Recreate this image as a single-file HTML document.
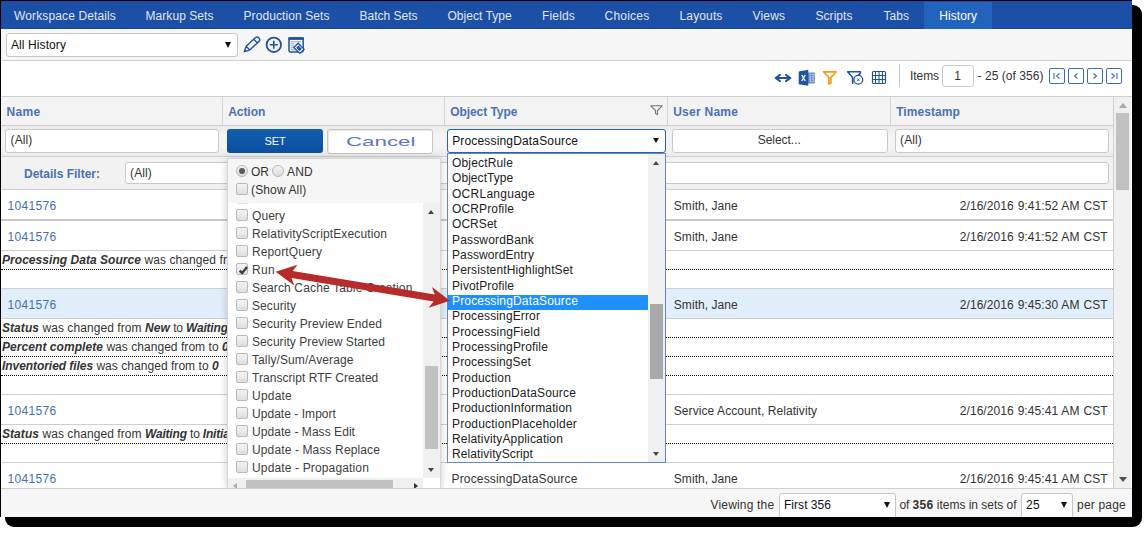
<!DOCTYPE html>
<html><head><meta charset="utf-8">
<style>
*{box-sizing:border-box;margin:0;padding:0}
html,body{width:1148px;height:533px;overflow:hidden;background:#fff;font-family:"Liberation Sans",sans-serif;font-size:12px;color:#333}
.a{position:absolute}
#shadow{position:absolute;left:5px;top:5px;width:1137px;height:522px;background:#000;border-radius:9px}
#frame{position:absolute;left:0;top:0;width:1132px;height:517px;background:#fff;border-top:1px solid #000;border-left:1px solid #000;overflow:hidden}
#nav{position:absolute;left:0;top:0;width:1131px;height:28px;background:#1c4fa6;border-bottom:1px solid #17469a}
.tab{position:absolute;top:0;height:28px;line-height:31px;font-size:12px;color:#e2e6ef;white-space:nowrap}
.tab.act{background:#2263bd;color:#fff;top:1px;height:27px;line-height:29px}
#tb1{position:absolute;left:0;top:28px;width:1131px;height:32px;background:#f6f6f6;border-bottom:1px solid #cfcfcf}
.sel{position:absolute;background:#fff;border:1px solid #c6c6c6;border-radius:3px;white-space:nowrap}
.arr{position:absolute;width:0;height:0;border-left:4px solid transparent;border-right:4px solid transparent;border-top:8px solid #111}
#tb2{position:absolute;left:0;top:60px;width:1131px;height:36px;background:#fff;border-bottom:1px solid #cfcfcf}
.pg{position:absolute;top:7px;width:16px;height:16px;border:1px solid #3b6cb5;border-radius:2px;background:#fff}
#hdr{position:absolute;left:0;top:96px;width:1112px;height:29px;background:#f3f3f3;border-bottom:1px solid #cfcfcf}
.hc{position:absolute;top:0;height:28px;border-left:1px solid #d4d4d4;font-weight:bold;color:#4a72b4;line-height:30px;padding-left:5.2px}
#flt{position:absolute;left:0;top:125px;width:1112px;height:31px;background:linear-gradient(#eaeaea,#f4f4f4 30%,#f4f4f4 70%,#ebebeb);border-bottom:1px solid #cfcfcf}
.inp{position:absolute;background:#fff;border:1px solid #c9c9c9;border-radius:3px;white-space:nowrap;padding-left:5px;line-height:21px}
#dflt{position:absolute;left:0;top:156px;width:1112px;height:33px;background:#f2f2f2;border-bottom:1px solid #cfcfcf}
.row{position:absolute;left:0;width:1112px;background:#fff;border-bottom:1px solid #cfcfcf}
.lnk{position:absolute;left:6.5px;color:#4370b5}
.un{position:absolute;left:672.8px}
.ts{position:absolute;right:5.4px;word-spacing:0.5px}
.det{position:absolute;left:0;width:1112px;height:19px;border-bottom:1px dotted #000;padding-left:1px;white-space:nowrap;line-height:18px}
.det b{font-style:italic}
#footer{position:absolute;left:0;top:487px;width:1131px;height:30px;background:#f6f6f6;border-top:1px solid #cfcfcf}
#vscroll{position:absolute;left:1112px;top:96px;width:19px;height:392px;background:#f0f0f0;border-left:1px solid #cfcfcf;border-right:1px solid #fff}
.cb{position:absolute;width:12px;height:12px;border:1px solid #b8b8b8;border-radius:2px;background:linear-gradient(#f4f4f4,#dedede)}
.pitem{position:absolute;left:24px;white-space:nowrap;color:#3d3d3d;line-height:14px}
.oitem{position:absolute;left:4px;white-space:nowrap;color:#222;height:15.3px;line-height:15px}
</style></head><body>
<div id="shadow"></div>
<div id="frame">
 <div id="nav">
  <div class="tab" style="left:13.1px"><span style="letter-spacing:0.116px">Workspace Details</span></div>
  <div class="tab" style="left:144.5px"><span style="letter-spacing:0.058px">Markup Sets</span></div>
  <div class="tab" style="left:242.5px"><span style="letter-spacing:0.086px">Production Sets</span></div>
  <div class="tab" style="left:358.5px">Batch Sets</div>
  <div class="tab" style="left:446.5px"><span style="letter-spacing:0.028px">Object Type</span></div>
  <div class="tab" style="left:541px"><span style="letter-spacing:0.165px">Fields</span></div>
  <div class="tab" style="left:603.5px"><span style="letter-spacing:0.235px">Choices</span></div>
  <div class="tab" style="left:678.5px"><span style="letter-spacing:0.139px">Layouts</span></div>
  <div class="tab" style="left:751.5px"><span style="letter-spacing:0.198px">Views</span></div>
  <div class="tab" style="left:814.5px"><span style="letter-spacing:0.047px">Scripts</span></div>
  <div class="tab" style="left:882.5px"><span style="letter-spacing:0.081px">Tabs</span></div>
  <div class="tab act" style="left:923px;width:68px;padding-left:15.2px"><span style="letter-spacing:0.095px">History</span></div>
 </div>
 <div id="tb1">
  <div class="sel" style="left:5px;top:4px;width:232px;height:24px;line-height:22px;padding-left:4px;color:#111"><span style="letter-spacing:0.090px">All History</span></div>
  <div class="a" style="left:224px;top:13px;border-left:3.2px solid transparent;border-right:3.2px solid transparent;border-top:6px solid #111"></div>
  <svg class="a" style="left:239px;top:3px" width="70" height="26" viewBox="240 32 70 26">
   <g transform="translate(244.3,51.6) rotate(-43)"><path d="M0,0 L5,-2.6 H17.4 a2.6,2.6 0 0 1 0,5.2 H5 Z M5,-2.6 V2.6 M15.4,-2.6 V2.6" fill="none" stroke="#1f53a3" stroke-width="1.4" stroke-linejoin="round"/><path d="M0,0 L2.2,-1.2 V1.2 Z" fill="#1f53a3"/></g>
   <circle cx="273.8" cy="44.8" r="7.2" fill="none" stroke="#1f53a3" stroke-width="1.8"/><path d="M273.8 40.8 V48.8 M269.8 44.8 H277.8" stroke="#1f53a3" stroke-width="1.6"/>
   <rect x="289" y="38" width="14.2" height="14" rx="1.5" fill="#fff" stroke="#1f53a3" stroke-width="1.5"/><rect x="288.3" y="37.3" width="15.6" height="2.6" fill="#1f53a3"/>
   <path d="M290.5 41.8 H301 M290.5 43.8 H294.5 M290.5 45.8 H294.5 M290.5 47.8 H294.5 M290.5 49.8 H296" stroke="#8aa6d3" stroke-width="1"/>
   <g transform="translate(299,48.3) rotate(45)"><rect x="-4.2" y="-3" width="8.4" height="6" fill="#fff" stroke="#1f53a3" stroke-width="1.3"/><rect x="-2.4" y="-1.6" width="4.8" height="3.2" fill="#1f53a3"/></g>
  </svg>
 </div>
 <div id="tb2">
  <svg class="a" style="left:769px;top:1px" width="120" height="30" viewBox="770 62 120 30">
   <path d="M777 78 H789" stroke="#1f53a3" stroke-width="2"/><path d="M780 74.9 L775.6 78 L780 81.1 M786 74.9 L790.4 78 L786 81.1" fill="none" stroke="#1f53a3" stroke-width="2" stroke-linejoin="round" stroke-linecap="round"/>
   <rect x="807.5" y="72.5" width="7.3" height="11" fill="#6b8fc7"/><path d="M810.2 74 V82.5 M813 74 V82.5" stroke="#fff" stroke-width="1" stroke-dasharray="1.2 1"/>
   <path d="M798.7 71.6 L808.3 69.8 V85.8 L798.7 84.2 Z" fill="#1f53a3"/><path d="M801.7 75 L805.3 81 M805.3 75 L801.7 81" stroke="#fff" stroke-width="1.3"/>
   <path d="M823.6 71.8 H836.1 L830.9 77.6 V83 L828.9 84 V77.6 Z" fill="none" stroke="#f39c1a" stroke-width="1.7" stroke-linejoin="round"/>
   <path d="M860.4 73.4 V71.8 H847.6 L852.6 77.6 V84" fill="none" stroke="#1f53a3" stroke-width="1.6" stroke-linejoin="round"/><path d="M860.4 73.4 L856.5 76.8" stroke="#1f53a3" stroke-width="1.6"/>
   <circle cx="858.3" cy="79.8" r="4.4" fill="#fff" stroke="#1f53a3" stroke-width="1.3"/><path d="M857 78.5 L859.6 81.1 M859.6 78.5 L857 81.1" stroke="#1f53a3" stroke-width="0.9"/>
   <rect x="872.5" y="71.5" width="13" height="12" rx="1" fill="none" stroke="#1f53a3" stroke-width="1.2"/><path d="M875.5 71.5 V83.5 M879 71.5 V83.5 M882.5 71.5 V83.5 M872.5 75.5 H885.5 M872.5 79.5 H885.5" stroke="#1f53a3" stroke-width="1.1"/>
  </svg>
  <div class="a" style="left:898px;top:3px;width:1px;height:23px;background:#c8c8c8"></div>
  <div class="a" style="left:909px;top:8px;color:#333"><span style="letter-spacing:-0.068px">Items</span></div>
  <div class="inp" style="left:940.8px;top:4.3px;width:32px;height:22px;text-align:center;padding:0;line-height:20px"><span style="letter-spacing:0.326px">1</span></div>
  <div class="a" style="left:976.5px;top:8px;color:#333"><span style="letter-spacing:0.049px">- 25 (of 356)</span></div>
  <div class="pg" style="left:1048px"><svg width="14" height="14" viewBox="0 0 14 14"><path d="M4 4 V10 M9.5 4.5 L6.5 7 L9.5 9.5" fill="none" stroke="#3b6cb5" stroke-width="1.1"/></svg></div>
  <div class="pg" style="left:1067px"><svg width="14" height="14" viewBox="0 0 14 14"><path d="M8.5 4.5 L5.5 7 L8.5 9.5" fill="none" stroke="#3b6cb5" stroke-width="1.1"/></svg></div>
  <div class="pg" style="left:1086px"><svg width="14" height="14" viewBox="0 0 14 14"><path d="M5.5 4.5 L8.5 7 L5.5 9.5" fill="none" stroke="#3b6cb5" stroke-width="1.1"/></svg></div>
  <div class="pg" style="left:1105px"><svg width="14" height="14" viewBox="0 0 14 14"><path d="M10 4 V10 M4.5 4.5 L7.5 7 L4.5 9.5" fill="none" stroke="#3b6cb5" stroke-width="1.1"/></svg></div>
 </div>
 <div id="hdr">
  <div class="hc" style="left:-1px;width:223px;border-left:none;padding-left:6.5px"><span style="letter-spacing:0.329px">Name</span></div>
  <div class="hc" style="left:221px;width:223px"><span style="letter-spacing:-0.055px">Action</span></div>
  <div class="hc" style="left:443px;width:223px"><span style="letter-spacing:-0.062px">Object Type</span><svg class="a" style="left:205.2px;top:7.7px" width="13" height="11" viewBox="0 0 13 11"><path d="M0.8 0.8 H12.2 L7.5 5.5 V9.6 L5.5 8.6 V5.5 Z" fill="none" stroke="#777" stroke-width="1.1" stroke-linejoin="round"/></svg></div>
  <div class="hc" style="left:666px;width:223px"><span style="letter-spacing:0.255px">User Name</span></div>
  <div class="hc" style="left:889px;width:224px"><span style="letter-spacing:0.072px">Timestamp</span></div>
 </div>
 <div id="flt">
  <div class="inp" style="left:4px;top:3px;width:214px;height:24px;padding-left:4.5px"><span style="letter-spacing:0.134px">(All)</span></div>
  <div class="a" style="left:226px;top:3px;width:96px;height:24px;border-radius:3px;background:linear-gradient(#135eb0,#0b4f9e);color:#fff;font-size:11px;text-align:center;line-height:24px"><span style="letter-spacing:-0.131px">SET</span></div>
  <div class="a" style="left:326px;top:3px;width:106px;height:25px;border-radius:3px;border:1px solid #c6c6c6;background:#fff;box-shadow:inset 1px 1px 0 #e8e8e8"><span class="a nols" style="left:17.9px;top:5.1px;font-size:12.4px;color:#5f76c4;transform:scaleX(1.8);transform-origin:0 0;line-height:14px">Cancel</span></div>
  <div class="a" style="left:446px;top:3px;width:219px;height:24px;border:1px solid #2c5fb4;border-radius:3px;background:#fff;line-height:22px;padding-left:4.2px;color:#111"><span style="letter-spacing:0.163px">ProcessingDataSource</span><div class="a" style="left:204.8px;top:7.7px;border-left:3px solid transparent;border-right:3px solid transparent;border-top:5.5px solid #111"></div></div>
  <div class="inp" style="left:671px;top:3px;width:216px;height:24px;text-align:center;padding:0 1.5px 0 0"><span style="letter-spacing:-0.039px">Select...</span></div>
  <div class="inp" style="left:894px;top:3px;width:214px;height:24px;padding-left:4px"><span style="letter-spacing:0.134px">(All)</span></div>
 </div>
 <div id="dflt">
  <div class="a" style="left:23px;top:1px;line-height:33px;font-weight:bold;color:#4a72b4">Details Filter:</div>
  <div class="inp" style="left:124px;top:5px;width:984px;height:22px;line-height:20px;padding-left:4px"><span style="letter-spacing:0.134px">(All)</span></div>
 </div>
 <!-- rows -->
 <div class="row" style="top:189px;height:31px;border-bottom:2px solid #c9c9c9"><span class="lnk" style="top:9px"><span style="letter-spacing:0.326px">1041576</span></span><span class="un" style="top:9px"><span style="letter-spacing:0.058px">Smith, Jane</span></span><span class="ts" style="top:9px"><span style="letter-spacing:0.066px">2/16/2016 9:41:52 AM CST</span></span></div>
 <div class="row" style="top:220px;height:30px"><span class="lnk" style="top:9px"><span style="letter-spacing:0.326px">1041576</span></span><span class="un" style="top:9px"><span style="letter-spacing:0.058px">Smith, Jane</span></span><span class="ts" style="top:9px"><span style="letter-spacing:0.066px">2/16/2016 9:41:52 AM CST</span></span></div>
 <div class="det" style="top:250px"><b><span style="letter-spacing:0.043px">Processing Data Source</span></b><span style="letter-spacing:0.086px"> was changed fr</span></div>
 <div class="row" style="top:269px;height:19px;border-bottom:1px solid #cfcfcf"></div>
 <div class="row" style="top:288px;height:30px;background:#e1effc"><span class="lnk" style="top:9px"><span style="letter-spacing:0.326px">1041576</span></span><span class="un" style="top:9px"><span style="letter-spacing:0.058px">Smith, Jane</span></span><span class="ts" style="top:9px"><span style="letter-spacing:0.066px">2/16/2016 9:45:30 AM CST</span></span></div>
 <div class="det" style="top:318px"><b><span style="letter-spacing:0.054px">Status</span></b><span style="letter-spacing:0.071px"> was changed from </span><b><span style="letter-spacing:0.109px">New</span></b><span style="letter-spacing:-0.169px"> to </span><b><span style="letter-spacing:-0.189px">Waiting</span></b></div>
 <div class="det" style="top:337px"><b><span style="letter-spacing:0.060px">Percent complete</span></b><span style="letter-spacing:0.045px"> was changed from to </span><b><span style="letter-spacing:0.326px">0</span></b></div>
 <div class="det" style="top:356px"><b><span style="letter-spacing:-0.060px">Inventoried files</span></b><span style="letter-spacing:0.045px"> was changed from to </span><b><span style="letter-spacing:0.326px">0</span></b></div>
 <div class="row" style="top:375px;height:19px"></div>
 <div class="row" style="top:394px;height:30px"><span class="lnk" style="top:9px"><span style="letter-spacing:0.326px">1041576</span></span><span class="un" style="top:9px"><span style="letter-spacing:0.072px">Service Account, Relativity</span></span><span class="ts" style="top:9px"><span style="letter-spacing:0.066px">2/16/2016 9:45:41 AM CST</span></span></div>
 <div class="det" style="top:424px"><b><span style="letter-spacing:0.054px">Status</span></b><span style="letter-spacing:0.071px"> was changed from </span><b><span style="letter-spacing:-0.189px">Waiting</span></b><span style="letter-spacing:-0.169px"> to </span><b><span style="letter-spacing:-0.191px">Initial</span></b></div>
 <div class="row" style="top:443px;height:19px"></div>
 <div class="row" style="top:462px;height:26px"><span class="lnk" style="top:9px"><span style="letter-spacing:0.326px">1041576</span></span><span class="a" style="left:450.5px;top:9px"><span style="letter-spacing:0.163px">ProcessingDataSource</span></span><span class="un" style="top:9px"><span style="letter-spacing:0.058px">Smith, Jane</span></span><span class="ts" style="top:9px"><span style="letter-spacing:0.066px">2/16/2016 9:45:41 AM CST</span></span></div>
<div class="a" style="left:226px;top:157px;width:214px;height:331px;background:#f5f5f5;border:1px solid #d6d6d6;box-shadow:0 1px 8px rgba(0,0,0,0.2)">
  <div class="a" style="left:8px;top:6px;width:12px;height:12px;border-radius:50%;border:1px solid #b5b5b5;background:linear-gradient(#f4f4f4,#dcdcdc)"><div class="a" style="left:2px;top:2px;width:6px;height:6px;border-radius:50%;background:#5a5a5a"></div></div>
  <div class="a" style="left:23px;top:6px">OR</div>
  <div class="a" style="left:44.2px;top:6px;width:12px;height:12px;border-radius:50%;border:1px solid #b5b5b5;background:linear-gradient(#f4f4f4,#dcdcdc)"></div>
  <div class="a" style="left:59px;top:6px"><span style="letter-spacing:0.221px">AND</span></div>
  <div class="cb" style="left:8px;top:23.7px"></div>
  <div class="a" style="left:23px;top:24px"><span style="letter-spacing:0.132px">(Show All)</span></div>
  <div class="a" style="left:0;top:44px;width:212px;height:287px;background:#fff;overflow:hidden">
   <div class="a" style="left:10px;top:0px;width:10px;height:1px;background:#e2e2e2"></div>
   <div class="cb" style="left:8px;top:5.5px"></div><div class="pitem" style="top:5.5px"><span style="letter-spacing:0.064px">Query</span></div>
   <div class="cb" style="left:8px;top:23.5px"></div><div class="pitem" style="top:23.5px"><span style="letter-spacing:0.118px">RelativityScriptExecution</span></div>
   <div class="cb" style="left:8px;top:41.5px"></div><div class="pitem" style="top:41.5px"><span style="letter-spacing:0.119px">ReportQuery</span></div>
   <div class="cb" style="left:8px;top:59.5px"><svg class="a" style="left:1px;top:1px" width="10" height="10" viewBox="0 0 10 10"><path d="M1.7 5.6 L4.1 8.1 L9 2" fill="none" stroke="#3c3c3c" stroke-width="2.3"/></svg></div><div class="pitem" style="top:59.5px"><span style="letter-spacing:0.329px">Run</span></div>
   <div class="cb" style="left:8px;top:77.5px"></div><div class="pitem" style="top:77.5px"><span style="letter-spacing:0.145px">Search Cache Table Creation</span></div>
   <div class="cb" style="left:8px;top:95.5px"></div><div class="pitem" style="top:95.5px"><span style="letter-spacing:0.082px">Security</span></div>
   <div class="cb" style="left:8px;top:113.5px"></div><div class="pitem" style="top:113.5px"><span style="letter-spacing:0.118px">Security Preview Ended</span></div>
   <div class="cb" style="left:8px;top:131.5px"></div><div class="pitem" style="top:131.5px"><span style="letter-spacing:0.067px">Security Preview Started</span></div>
   <div class="cb" style="left:8px;top:149.5px"></div><div class="pitem" style="top:149.5px"><span style="letter-spacing:0.096px">Tally/Sum/Average</span></div>
   <div class="cb" style="left:8px;top:167.5px"></div><div class="pitem" style="top:167.5px"><span style="letter-spacing:0.044px">Transcript RTF Created</span></div>
   <div class="cb" style="left:8px;top:185.5px"></div><div class="pitem" style="top:185.5px"><span style="letter-spacing:0.217px">Update</span></div>
   <div class="cb" style="left:8px;top:203.5px"></div><div class="pitem" style="top:203.5px"><span style="letter-spacing:0.042px">Update - Import</span></div>
   <div class="cb" style="left:8px;top:221.5px"></div><div class="pitem" style="top:221.5px"><span style="letter-spacing:0.053px">Update - Mass Edit</span></div>
   <div class="cb" style="left:8px;top:239.5px"></div><div class="pitem" style="top:239.5px"><span style="letter-spacing:0.124px">Update - Mass Replace</span></div>
   <div class="cb" style="left:8px;top:257.5px"></div><div class="pitem" style="top:257.5px"><span style="letter-spacing:0.146px">Update - Propagation</span></div>
   <div class="a" style="left:195px;top:0;width:17px;height:275px;background:#f0f0f0"><div class="a" style="left:5px;top:6.8px;border-left:3.6px solid transparent;border-right:3.6px solid transparent;border-bottom:4.4px solid #444"></div><div class="a" style="left:2px;top:163px;width:13px;height:83px;background:#c1c1c1"></div><div class="a" style="left:5px;top:264.5px;border-left:3.6px solid transparent;border-right:3.6px solid transparent;border-top:4.4px solid #444"></div></div>
   <div class="a" style="left:0;top:275px;width:195px;height:14px;background:#f0f0f0"><div class="a" style="left:5px;top:5px;border-top:3px solid transparent;border-bottom:3px solid transparent;border-right:4px solid #aaa"></div><div class="a" style="left:18px;top:2px;width:147px;height:10px;background:#c1c1c1"></div><div class="a" style="left:186px;top:5px;border-top:3px solid transparent;border-bottom:3px solid transparent;border-left:4px solid #333"></div></div>
  </div>
 </div>
<div class="a" style="left:446px;top:152px;width:219px;height:310px;background:#fff;border:1px solid #5f86c9;overflow:hidden">
  <div class="oitem" style="top:2.00px"><span style="letter-spacing:0.164px">ObjectRule</span></div>
  <div class="oitem" style="top:17.33px"><span style="letter-spacing:0.064px">ObjectType</span></div>
  <div class="oitem" style="top:32.66px"><span style="letter-spacing:0.268px">OCRLanguage</span></div>
  <div class="oitem" style="top:47.99px"><span style="letter-spacing:0.132px">OCRProfile</span></div>
  <div class="oitem" style="top:63.32px"><span style="letter-spacing:0.054px">OCRSet</span></div>
  <div class="oitem" style="top:78.65px"><span style="letter-spacing:0.163px">PasswordBank</span></div>
  <div class="oitem" style="top:93.98px"><span style="letter-spacing:0.100px">PasswordEntry</span></div>
  <div class="oitem" style="top:109.31px"><span style="letter-spacing:0.134px">PersistentHighlightSet</span></div>
  <div class="oitem" style="top:124.64px"><span style="letter-spacing:0.109px">PivotProfile</span></div>
  <div class="a" style="left:0;top:141.07px;width:200px;height:14.6px;background:#1e90ff"></div><div class="oitem" style="top:139.97px;color:#fff"><span style="letter-spacing:0.163px">ProcessingDataSource</span></div>
  <div class="oitem" style="top:155.30px"><span style="letter-spacing:0.132px">ProcessingError</span></div>
  <div class="oitem" style="top:170.63px"><span style="letter-spacing:0.175px">ProcessingField</span></div>
  <div class="oitem" style="top:185.96px"><span style="letter-spacing:0.154px">ProcessingProfile</span></div>
  <div class="oitem" style="top:201.29px"><span style="letter-spacing:0.125px">ProcessingSet</span></div>
  <div class="oitem" style="top:216.62px"><span style="letter-spacing:0.163px">Production</span></div>
  <div class="oitem" style="top:231.95px"><span style="letter-spacing:0.163px">ProductionDataSource</span></div>
  <div class="oitem" style="top:247.28px"><span style="letter-spacing:0.124px">ProductionInformation</span></div>
  <div class="oitem" style="top:262.61px"><span style="letter-spacing:0.203px">ProductionPlaceholder</span></div>
  <div class="oitem" style="top:277.94px"><span style="letter-spacing:0.172px">RelativityApplication</span></div>
  <div class="oitem" style="top:293.27px"><span style="letter-spacing:0.103px">RelativityScript</span></div>
  <div class="a" style="left:200px;top:0;width:17px;height:308px;background:#f0f0f0"><div class="a" style="left:5px;top:6.8px;border-left:3.6px solid transparent;border-right:3.6px solid transparent;border-bottom:4.4px solid #444"></div><div class="a" style="left:2px;top:149.5px;width:13px;height:75px;background:#a9a9a9"></div><div class="a" style="left:5px;top:297.5px;border-left:3.6px solid transparent;border-right:3.6px solid transparent;border-top:4.4px solid #444"></div></div>
 </div>
<svg class="a" style="left:0;top:0" width="1131" height="516"><polygon points="274.6,270.8 296.5,263.8 291.7,270.0 433.8,293.5 431.0,286.1 449.0,299.7 427.6,306.8 432.6,300.6 290.5,277.1 293.3,284.5" fill="#b82b2b"/></svg>
 <div id="vscroll"><div class="a" style="left:5px;top:6px;border-left:4px solid transparent;border-right:4px solid transparent;border-bottom:5px solid #a8a8a8"></div><div class="a" style="left:2px;top:15.8px;width:13px;height:77.5px;background:#c1c1c1"></div><div class="a" style="left:5px;top:380px;border-left:4px solid transparent;border-right:4px solid transparent;border-top:5px solid #505050"></div></div>
 <div id="footer">
  <div class="a" style="left:709.5px;top:9px"><span style="letter-spacing:0.178px">Viewing the</span></div>
  <div class="sel" style="left:778px;top:3.6px;width:117px;height:26px;line-height:22px;padding-left:4px;color:#111"><span style="letter-spacing:0.035px">First 356</span><div class="a" style="left:104px;top:8.5px;border-left:3px solid transparent;border-right:3px solid transparent;border-top:6px solid #111"></div></div>
  <div class="a" style="left:898.5px;top:9px"><span style="letter-spacing:-0.114px">of </span><b><span style="letter-spacing:0.326px">356</span></b><span style="letter-spacing:-0.021px"> items in sets of</span></div>
  <div class="sel" style="left:1020px;top:3.6px;width:52px;height:26px;line-height:22px;padding-left:4px;color:#111"><span style="letter-spacing:0.326px">25</span><div class="a" style="left:39px;top:8.5px;border-left:3px solid transparent;border-right:3px solid transparent;border-top:6px solid #111"></div></div>
  <div class="a" style="left:1076px;top:9px"><span style="letter-spacing:0.203px">per page</span></div>
 </div>
</div>
</body></html>
